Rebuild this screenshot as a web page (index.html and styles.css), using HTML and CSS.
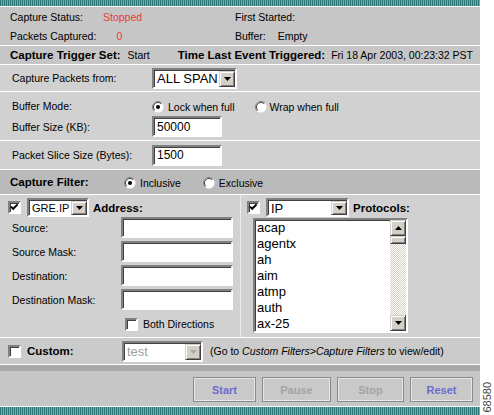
FILE: index.html
```html
<!DOCTYPE html>
<html>
<head>
<meta charset="utf-8">
<link rel="stylesheet" href="styles.css">
</head>
<body>
<div class="page">
  <div class="panel">
    <div class="stripe"></div>

    <div class="status">
      <div class="srow">
        <div class="scell l"><span>Capture Status:</span><span class="red">Stopped</span></div>
        <div class="scell r"><span>First Started:</span></div>
      </div>
      <div class="srow">
        <div class="scell l"><span>Packets Captured:</span><span class="red">0</span></div>
        <div class="scell r"><span>Buffer:</span><span>Empty</span></div>
      </div>
    </div>

    <div class="trigger">
      <b class="bl">Capture Trigger Set:</b><span class="trig-start">Start</span><b class="bl trig-time">Time Last Event Triggered:</b><span class="trig-val">Fri 18 Apr 2003, 00:23:32 PST</span>
    </div>

    <div class="sec packets">
      <span class="lbl">Capture Packets from:</span>
      <div class="sel sel-span"><span class="v">ALL SPAN</span><span class="b"><svg width="7" height="4" viewBox="0 0 7 4"><path d="M0 0h7L3.5 4z"/></svg></span></div>
    </div>

    <div class="sec buffer">
      <div class="gline">
        <span class="lbl">Buffer Mode:</span>
        <span class="radio"><svg class="rd" viewBox="0 0 12 12"><circle cx="6" cy="6" r="5.5" fill="#fff"/><path d="M2.1 9.9A5.5 5.5 0 0 1 9.9 2.1" fill="none" stroke="#808080"/><path d="M2.8 9.2A4.5 4.5 0 0 1 9.2 2.8" fill="none" stroke="#404040"/><circle cx="6" cy="6" r="2"/></svg>Lock when full</span>
        <span class="radio wrap"><svg class="rd" viewBox="0 0 12 12"><circle cx="6" cy="6" r="5.5" fill="#fff"/><path d="M2.1 9.9A5.5 5.5 0 0 1 9.9 2.1" fill="none" stroke="#808080"/><path d="M2.8 9.2A4.5 4.5 0 0 1 9.2 2.8" fill="none" stroke="#404040"/></svg>Wrap when full</span>
      </div>
      <div class="gline">
        <span class="lbl">Buffer Size (KB):</span>
        <div class="input w70">50000</div>
      </div>
    </div>

    <div class="sec slice">
      <span class="lbl">Packet Slice Size (Bytes):</span>
      <div class="input w70">1500</div>
    </div>

    <div class="sec filter">
      <b class="bl filt-lbl">Capture Filter:</b>
      <span class="radio"><svg class="rd" viewBox="0 0 12 12"><circle cx="6" cy="6" r="5.5" fill="#fff"/><path d="M2.1 9.9A5.5 5.5 0 0 1 9.9 2.1" fill="none" stroke="#808080"/><path d="M2.8 9.2A4.5 4.5 0 0 1 9.2 2.8" fill="none" stroke="#404040"/><circle cx="6" cy="6" r="2"/></svg>Inclusive</span>
      <span class="radio excl"><svg class="rd" viewBox="0 0 12 12"><circle cx="6" cy="6" r="5.5" fill="#fff"/><path d="M2.1 9.9A5.5 5.5 0 0 1 9.9 2.1" fill="none" stroke="#808080"/><path d="M2.8 9.2A4.5 4.5 0 0 1 9.2 2.8" fill="none" stroke="#404040"/></svg>Exclusive</span>
    </div>

    <div class="addr">
      <div class="acol left">
        <div class="ahead">
          <span class="cb"><svg viewBox="0 0 9 9"><polyline points="1,3.6 3.2,5.8 7.6,1.4" fill="none" stroke="#000" stroke-width="2"/></svg></span>
          <div class="sel sel-gre"><span class="v">GRE.IP</span><span class="b"><svg width="7" height="4" viewBox="0 0 7 4"><path d="M0 0h7L3.5 4z"/></svg></span></div>
          <b class="bl">Address:</b>
        </div>
        <div class="arow"><span class="albl">Source:</span><div class="input w112"></div></div>
        <div class="arow"><span class="albl">Source Mask:</span><div class="input w112"></div></div>
        <div class="arow"><span class="albl">Destination:</span><div class="input w112"></div></div>
        <div class="arow"><span class="albl">Destination Mask:</span><div class="input w112"></div></div>
        <div class="both"><span class="cb"></span><span>Both Directions</span></div>
      </div>
      <div class="vline"></div>
      <div class="acol right">
        <div class="ahead">
          <span class="cb"><svg viewBox="0 0 9 9"><polyline points="1,3.6 3.2,5.8 7.6,1.4" fill="none" stroke="#000" stroke-width="2"/></svg></span>
          <div class="sel sel-ip"><span class="v">IP</span><span class="b"><svg width="7" height="4" viewBox="0 0 7 4"><path d="M0 0h7L3.5 4z"/></svg></span></div>
          <b class="bl">Protocols:</b>
        </div>
        <div class="list">
          <div class="items">
            <div>acap</div><div>agentx</div><div>ah</div><div>aim</div><div>atmp</div><div>auth</div><div>ax-25</div>
          </div>
          <div class="sb">
            <div class="sbtn"><svg width="7" height="4" viewBox="0 0 7 4"><path d="M0 4h7L3.5 0z"/></svg></div>
            <div class="thumb"></div>
            <div class="track"></div>
            <div class="sbtn"><svg width="7" height="4" viewBox="0 0 7 4"><path d="M0 0h7L3.5 4z"/></svg></div>
          </div>
        </div>
      </div>
    </div>

    <div class="sec custom">
      <span class="cb"></span>
      <b class="bl cust-lbl">Custom:</b>
      <div class="sel sel-test disabled"><span class="v">test</span><span class="b"><svg width="7" height="4" viewBox="0 0 7 4"><path d="M0 0h7L3.5 4z"/></svg></span></div>
      <span class="goto">(Go to <i>Custom Filters&gt;Capture Filters</i> to view/edit)</span>
    </div>

    <div class="sep"></div>

    <div class="btns">
      <div class="btn active w63">Start</div>
      <div class="btn w69">Pause</div>
      <div class="btn w67">Stop</div>
      <div class="btn active w63">Reset</div>
    </div>

    <div class="stripe bottom"></div>
  </div>
  <div class="aside"><span class="fig">68580</span></div>
</div>
</body>
</html>
```

FILE: styles.css
```css
* { box-sizing: border-box; }

body {
  margin: 0;
  background: #fff;
  font-family: "Liberation Sans", Arial, sans-serif;
  font-size: 10.5px;
  color: #000;
}

.page {
  display: flex;
  width: 494px;
  height: 415px;
  overflow: hidden;
}

.panel {
  width: 480px;
  flex: none;
  display: flex;
  flex-direction: column;
}

.stripe {
  flex: none;
  height: 6px;
  background: repeating-linear-gradient(90deg, #2c7878 0 1px, #72adad 1px 2px);
}
.stripe.bottom {
  height: 9px;
  border-top: 1px solid #fff;
}

.bl {
  font-weight: bold;
  font-size: 11.5px;
}

/* status */
.status {
  flex: none;
  height: 39px;
  border-top: 1px solid #fff;
  background: #c6c6c6;
  display: flex;
  flex-direction: column;
}
.srow {
  height: 19px;
  display: flex;
  align-items: center;
}
.scell { display: flex; }
.scell.l { width: 235px; padding-left: 10px; gap: 20px; }
.scell.r { gap: 12px; }
.red { color: #e63a3a; }

/* trigger */
.trigger {
  flex: none;
  height: 19px;
  border-top: 1px solid #fff;
  background: #c6c6c6;
  display: flex;
  align-items: center;
  padding-left: 10px;
}
.trig-start { margin-left: 7px; }
.trig-time { margin-left: 28px; }
.trig-val { margin-left: 6px; }

/* generic form rows */
.sec {
  flex: none;
  border-top: 1px solid #fff;
  background: #d1d1d1;
  display: flex;
  align-items: center;
  padding-left: 12px;
}
.lbl { width: 140px; flex: none; }

.packets { height: 27px; }
.buffer {
  height: 49px;
  flex-direction: column;
  align-items: stretch;
  padding-top: 4px;
}
.gline { display: flex; align-items: center; height: 20px; }
.gline + .gline { height: 21px; }
.slice { height: 29px; }
.filter {
  height: 25px;
  background: #bababa;
  padding-left: 10px;
}
.filt-lbl { width: 114px; flex: none; }

/* controls */
.input {
  height: 21px;
  background: #fff;
  border: 2px solid;
  border-color: #808080 #fff #fff #808080;
  box-shadow: inset 1px 1px 0 #404040;
  font-size: 12px;
  padding-left: 3px;
  display: flex;
  align-items: center;
}
.w70 { width: 70px; }
.w112 { width: 112px; }

.sel {
  display: flex;
  background: #fff;
  border: 2px solid;
  border-color: #808080 #fff #fff #808080;
  box-shadow: inset 1px 1px 0 #404040;
  padding: 1px 0 0 1px;
}
.sel .v {
  flex: 1;
  display: flex;
  align-items: center;
  padding-left: 2px;
  font-size: 13px;
  white-space: nowrap;
  overflow: hidden;
}
.sel .b {
  width: 16px;
  flex: none;
  background: #d4d0c8;
  border: 1px solid;
  border-color: #d4d0c8 #404040 #404040 #d4d0c8;
  box-shadow: inset 1px 1px 0 #fff, inset -1px -1px 0 #808080;
  display: flex;
  align-items: center;
  justify-content: center;
}
.sel-span { width: 85px; height: 21px; }
.sel-gre { width: 62px; height: 19px; }
.sel-gre .v { font-size: 11px; padding-left: 2px; }
.sel-ip { width: 83px; height: 19px; }
.sel-test { width: 81px; height: 21px; }
.sel.disabled .v { color: #a0a0a0; }
.sel.disabled .b svg { fill: #a8a8a8; }

.radio {
  display: flex;
  align-items: center;
  gap: 4px;
  padding-top: 2px;
}
.rd { width: 12px; height: 12px; flex: none; }
.radio.wrap { margin-left: 20px; gap: 3px; }
.radio.excl { margin-left: 22px; }

.cb {
  width: 13px;
  height: 13px;
  flex: none;
  background: #fff;
  border: 2px solid;
  border-color: #808080 #fff #fff #808080;
  box-shadow: inset 1px 1px 0 #404040;
  display: flex;
}
.cb svg { width: 9px; height: 9px; }

/* address / protocols */
.addr {
  flex: none;
  height: 143px;
  border-top: 1px solid #fff;
  background: #d1d1d1;
  display: flex;
}
.acol { display: flex; flex-direction: column; padding-top: 3px; }
.acol.left { width: 240px; }
.vline { width: 1px; background: #ececec; }
.acol.right { flex: 1; }

.ahead {
  display: flex;
  align-items: center;
  height: 19px;
}
.left .ahead { padding-left: 8px; }
.right .ahead { padding-left: 6px; }
.ahead .cb { margin-right: 6px; }
.ahead .bl { margin-left: 4px; }

.arow {
  display: flex;
  align-items: flex-start;
  height: 24px;
  padding-left: 12px;
}
.left .arow:first-of-type { margin-top: 2px; }
.albl {
  width: 109px;
  flex: none;
  height: 21px;
  display: flex;
  align-items: center;
}
.both {
  display: flex;
  align-items: center;
  gap: 5px;
  height: 20px;
  padding-left: 125px;
  padding-top: 2px;
}

.list {
  margin: 1px 0 0 12px;
  width: 155px;
  height: 115px;
  background: #fff;
  border: 2px solid;
  border-color: #808080 #fff #fff #808080;
  box-shadow: inset 1px 1px 0 #404040;
  display: flex;
}
.items {
  flex: 1;
  padding-left: 2px;
  font-size: 13px;
  line-height: 16px;
  overflow: hidden;
}
.sb {
  width: 16px;
  flex: none;
  display: flex;
  flex-direction: column;
  background-color: #fff;
  background-image: repeating-conic-gradient(#d4d0c8 0 25%, #fff 0 50%);
  background-size: 2px 2px;
}
.sbtn, .thumb {
  background: #d4d0c8;
  border: 1px solid;
  border-color: #d4d0c8 #404040 #404040 #d4d0c8;
  box-shadow: inset 1px 1px 0 #fff, inset -1px -1px 0 #808080;
}
.sbtn {
  height: 16px;
  display: flex;
  align-items: center;
  justify-content: center;
}
.thumb { height: 8px; }
.track { flex: 1; }

/* custom */
.custom {
  height: 27px;
  background: #cbcbcb;
  padding-left: 8px;
}
.custom .cb { margin-right: 6px; }
.cust-lbl { width: 95px; flex: none; }
.goto { margin-left: 7px; white-space: nowrap; }

.sep {
  flex: none;
  height: 7px;
  border-top: 1px solid #fff;
  background: #a9a9a9;
}

.btns {
  flex: none;
  height: 35px;
  background: #c6c6c6;
  display: flex;
  justify-content: flex-end;
  align-items: flex-start;
  gap: 6px;
  padding: 6px 7px 0 0;
}
.btn {
  height: 25px;
  border: 1px solid #8a8a8a;
  box-shadow: inset 0 0 0 1px #e6e6e6;
  background: #c9c9c9;
  font-weight: bold;
  font-size: 11px;
  color: #a3a3a3;
  display: flex;
  align-items: center;
  justify-content: center;
}
.btn.active { color: #6b6bcc; }
.w63 { width: 63px; }
.w69 { width: 69px; }
.w67 { width: 67px; }

.aside {
  flex: 1;
  display: flex;
  align-items: flex-end;
  justify-content: center;
  padding-bottom: 2px;
}
.fig {
  writing-mode: vertical-rl;
  transform: rotate(180deg);
  font-size: 11px;
  color: #444;
}
```
